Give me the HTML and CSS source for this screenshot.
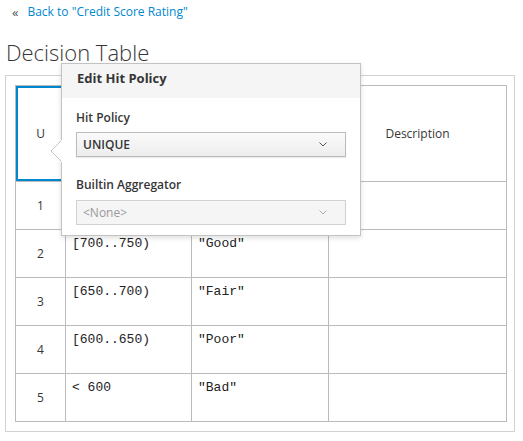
FILE: index.html
```
<!DOCTYPE html>
<html>
<head>
<meta charset="utf-8">
<link rel="stylesheet" href="styles.css">
</head>
<body>
<div class="back"><span class="back-icon">«</span><a class="back-link" href="#">Back to "Credit Score Rating"</a></div>
<h1 class="title">Decision Table</h1>
<div class="panel">
  <table class="dtable">
    <colgroup>
      <col class="c-num"><col class="c-in"><col class="c-out"><col class="c-desc">
    </colgroup>
    <tr class="head-row">
      <td class="hit selected">U</td>
      <td class="hcell"></td>
      <td class="hcell"></td>
      <td class="hcell">Description</td>
    </tr>
    <tr class="row"><td class="num">1</td><td class="mono"></td><td class="mono"></td><td></td></tr>
    <tr class="row"><td class="num">2</td><td class="mono">[700..750)</td><td class="mono">"Good"</td><td></td></tr>
    <tr class="row"><td class="num">3</td><td class="mono">[650..700)</td><td class="mono">"Fair"</td><td></td></tr>
    <tr class="row"><td class="num">4</td><td class="mono">[600..650)</td><td class="mono">"Poor"</td><td></td></tr>
    <tr class="row"><td class="num">5</td><td class="mono">&lt; 600</td><td class="mono">"Bad"</td><td></td></tr>
  </table>
</div>

<div class="popover">
  <svg class="pop-arrow" width="12" height="22" viewBox="0 0 12 22"><polygon points="11.5,0.5 1,11 11.5,21.5" fill="#fff" stroke="#c3c3c3" stroke-width="1"/><rect x="11" y="0" width="2" height="22" fill="#fff"/></svg>
  <div class="pop-head">Edit Hit Policy</div>
  <div class="pop-body">
    <div class="lbl lbl-first">Hit Policy</div>
    <div class="select">
      <span>UNIQUE</span>
      <svg class="chev" width="8" height="5" viewBox="0 0 8 5"><polyline points="0.5,0.5 4,4 7.5,0.5" fill="none" stroke="#555" stroke-width="1"/></svg>
    </div>
    <div class="lbl lbl-second">Builtin Aggregator</div>
    <div class="select disabled">
      <span>&lt;None&gt;</span>
      <svg class="chev" width="8" height="5" viewBox="0 0 8 5"><polyline points="0.5,0.5 4,4 7.5,0.5" fill="none" stroke="#aaa" stroke-width="1"/></svg>
    </div>
  </div>
</div>
</body>
</html>
```
FILE: styles.css
```
html, body {
  margin: 0;
  padding: 0;
  background: #fff;
}
body {
  font-family: "Open Sans", "Liberation Sans", sans-serif;
  color: #363636;
  width: 523px;
  height: 441px;
  overflow: hidden;
}
.back {
  height: 24px;
  line-height: 22px;
  font-size: 12px;
  padding-left: 12px;
  display: flex;
  align-items: center;
}
.back-icon {
  color: #4d5258;
  font-size: 13px;
  margin-right: 9px;
  margin-top: -1px;
}
.back-link {
  color: #0088ce;
  text-decoration: none;
}
.title {
  margin: 13px 0 8px 6px;
  font-size: 22px;
  line-height: 30px;
  font-weight: 300;
  color: #363636;
}
.panel {
  margin-left: 5px;
  width: 510px;
  box-sizing: border-box;
  border: 1px solid #d1d1d1;
  padding: 9px;
}
.dtable {
  border-collapse: collapse;
  width: 491px;
  table-layout: fixed;
  font-size: 12px;
}
.c-num { width: 50px; }
.c-in { width: 126px; }
.c-out { width: 137px; }
.c-desc { width: 178px; }
.dtable td {
  border: 1px solid #bbb;
  padding: 0;
}
.head-row td {
  height: 95px;
  text-align: center;
  vertical-align: middle;
}
.selected {
  box-shadow: inset 0 0 0 2px #0088ce;
}
.row td {
  height: 47px;
}
.num {
  text-align: center;
  vertical-align: middle;
}
.dtable td.mono {
  font-family: "Liberation Mono", monospace;
  font-size: 13px;
  line-height: 17px;
  height: 42px;
  vertical-align: top;
  padding: 5px 6px 0;
  color: #222;
}
.popover {
  position: absolute;
  left: 61px;
  top: 63px;
  width: 300px;
  height: 173px;
  box-sizing: border-box;
  background: #fff;
  border: 1px solid #c3c3c3;
  box-shadow: 0 2px 5px rgba(0,0,0,0.13);
}
.pop-arrow {
  position: absolute;
  left: -12px;
  top: 76px;
}
.pop-head {
  background: #f5f5f5;
  height: 34px;
  box-sizing: border-box;
  padding: 5px 15px 0;
  font-size: 13px;
  line-height: 18px;
  font-weight: 700;
  color: #363636;
}
.pop-body {
  padding: 0 14px;
}
.lbl {
  font-size: 12px;
  line-height: 18px;
  font-weight: 600;
  color: #363636;
}
.lbl-first { margin-top: 11px; margin-bottom: 5px; }
.lbl-second { margin-top: 19px; margin-bottom: 6px; }
.select {
  height: 25px;
  box-sizing: border-box;
  border: 1px solid #bbb;
  background: linear-gradient(#fafafa, #ededed);
  box-shadow: 0 1px 1px rgba(3,3,3,0.08);
  display: flex;
  align-items: center;
  justify-content: space-between;
  padding: 0 18px 0 6px;
  font-size: 12px;
  line-height: 23px;
  font-weight: 600;
  color: #363636;
}
.select.disabled {
  background: #f5f5f5;
  border-color: #d1d1d1;
  box-shadow: none;
  color: #999;
  font-weight: 400;
}
.chev {
  display: block;
}
```
